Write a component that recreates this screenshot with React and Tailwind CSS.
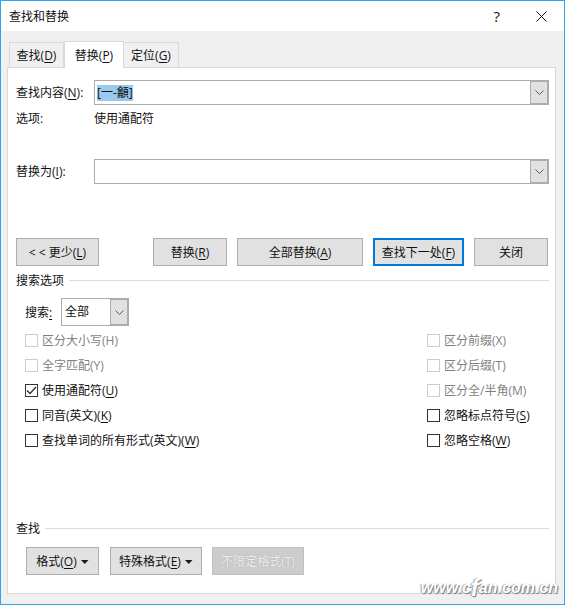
import React from "react";

const font = { fontFamily: '"Open Sans","Noto Sans CJK SC",sans-serif' };

function Chevron() {
  return (
    <svg width="9" height="5" viewBox="0 0 9 5" fill="none" stroke="#5a5a5a" strokeWidth="1">
      <path d="M0.5 0.5 L4.5 4.5 L8.5 0.5" />
    </svg>
  );
}

function Caret() {
  return (
    <svg width="8" height="4" viewBox="0 0 8 4" fill="#1a1a1a">
      <path d="M0 0 H7.5 L3.75 4 Z" />
    </svg>
  );
}

function U({ children }) {
  return <span className="underline underline-offset-2 decoration-1">{children}</span>;
}

function Combo({ children }) {
  return (
    <div className="flex h-[25px] flex-1 items-stretch border border-[#ababab] bg-white">
      <div className="flex flex-1 items-center pl-[2px]">{children}</div>
      <div className="flex w-[18px] items-center justify-center border border-[#adadad] bg-[#e1e1e1]">
        <Chevron />
      </div>
    </div>
  );
}

function Btn({ w, children, focus, disabled, ml }) {
  const base = "flex h-[28px] shrink-0 items-center justify-center gap-[4px] pt-px ";
  const skin = focus
    ? "border-2 border-[#0078d7] bg-[#e1e1e1]"
    : disabled
    ? "border border-[#bfbfbf] bg-[#cccccc] text-[#f0f0f0] [text-shadow:0_0_1px_#999]"
    : "border border-[#adadad] bg-[#e1e1e1]";
  return (
    <div className={base + skin} style={{ width: w, marginLeft: ml }}>
      {children}
    </div>
  );
}

function Check({ disabled, checked, children }) {
  return (
    <div className={"flex h-[25px] items-center gap-[4px] " + (disabled ? "text-[#7f7f7f]" : "text-[#111]")}>
      <div
        className={
          "flex h-[13px] w-[13px] items-center justify-center border bg-white " +
          (disabled ? "border-[#cccccc]" : "border-[#333333]")
        }
      >
        {checked && (
          <svg width="11" height="9" viewBox="0 0 11 9" fill="none" stroke="#333" strokeWidth="1.3">
            <path d="M1 4.5 L4 7.5 L10 1" />
          </svg>
        )}
      </div>
      <span className="pt-px">{children}</span>
    </div>
  );
}

function Section({ children }) {
  return (
    <div className="flex h-4 items-center gap-[5px] pl-2 pr-[6px]">
      <span className="pt-[2px]">{children}</span>
      <div className="h-px flex-1 bg-[#dcdcdc]" />
    </div>
  );
}

export default function App() {
  return (
    <div
      style={font}
      className="relative flex h-[605px] w-[565px] flex-col overflow-hidden border border-[#2ea3ee] bg-[#f0f0f0] text-[12px] leading-4 text-[#111]"
    >
      <div className="flex h-[30px] shrink-0 items-center bg-white pl-2">
        <span className="flex-1 pt-px">查找和替换</span>
        <span className="mr-[36px] text-[15px]">?</span>
        <svg className="mr-[17px]" width="11" height="11" viewBox="0 0 11 11" stroke="#111" strokeWidth="1" fill="none">
          <path d="M0.5 0.5 L10.5 10.5 M10.5 0.5 L0.5 10.5" />
        </svg>
      </div>

      <div className="flex h-[36px] shrink-0 items-end pl-2">
        <div className="flex h-[25px] w-[55px] items-center justify-center border border-b-0 border-[#d9d9d9] bg-[#f0f0f0] pt-px">
          查找(<U>D</U>)
        </div>
        <div className="z-10 -mb-px flex h-[27px] w-[60px] items-center justify-center border border-b-0 border-[#d9d9d9] bg-white pt-px">
          替换(<U>P</U>)
        </div>
        <div className="flex h-[25px] w-[55px] items-center justify-center border border-b-0 border-l-0 border-[#d9d9d9] bg-[#f0f0f0] pt-px">
          定位(<U>G</U>)
        </div>
      </div>

      <div className="mb-[10px] ml-[6px] mr-[8px] flex-1 border border-[#d9d9d9] bg-white pt-3">
        <div className="flex items-center pl-2 pr-[6px]">
          <div className="w-[78px] pt-px">
            查找内容(<U>N</U>):
          </div>
          <Combo>
            <span className="bg-[#99c9ef] leading-[16px]">[一-龥]</span>
          </Combo>
        </div>

        <div className="mt-[6px] flex h-4 items-center pl-2">
          <div className="w-[78px]">选项:</div>
          <div>使用通配符</div>
        </div>

        <div className="mt-[32px] flex items-center pl-2 pr-[6px]">
          <div className="w-[78px] pt-px">
            替换为(<U>I</U>):
          </div>
          <Combo />
        </div>

        <div className="mt-[54px] flex pl-2">
          <Btn w={83}>
            <span>
              &lt; &lt; 更少(<U>L</U>)
            </span>
          </Btn>
          <Btn w={74} ml={54}>
            <span>
              替换(<U>R</U>)
            </span>
          </Btn>
          <Btn w={126} ml={10}>
            <span>
              全部替换(<U>A</U>)
            </span>
          </Btn>
          <Btn w={91} ml={10} focus>
            <span>
              查找下一处(<U>F</U>)
            </span>
          </Btn>
          <Btn w={74} ml={10}>
            <span>关闭</span>
          </Btn>
        </div>

        <div className="mt-[6px]">
          <Section>搜索选项</Section>
        </div>

        <div className="mt-[10px] flex h-[28px] items-center pl-[17px]">
          <div className="w-[36px] pt-px">
            搜索<U>:</U>
          </div>
          <div className="flex h-[28px] w-[68px] items-stretch border border-[#ababab] bg-white">
            <div className="flex flex-1 items-center pl-[3px]">全部</div>
            <div className="flex w-[18px] items-center justify-center border border-[#adadad] bg-[#e1e1e1]">
              <Chevron />
            </div>
          </div>
        </div>

        <div className="mt-[2px] grid grid-cols-[402px_1fr] pl-[17px]">
          <div>
            <Check disabled>区分大小写(H)</Check>
            <Check disabled>全字匹配(Y)</Check>
            <Check checked>
              使用通配符(<U>U</U>)
            </Check>
            <Check>
              同音(英文)(<U>K</U>)
            </Check>
            <Check>
              查找单词的所有形式(英文)(<U>W</U>)
            </Check>
          </div>
          <div>
            <Check disabled>区分前缀(X)</Check>
            <Check disabled>区分后缀(T)</Check>
            <Check disabled>区分全/半角(M)</Check>
            <Check>
              忽略标点符号(<U>S</U>)
            </Check>
            <Check>
              忽略空格(<U>W</U>)
            </Check>
          </div>
        </div>

        <div className="mt-[67px]">
          <Section>查找</Section>
        </div>

        <div className="mt-[11px] flex pl-[18px]">
          <Btn w={73}>
            <span>
              格式(<U>O</U>)
            </span>
            <Caret />
          </Btn>
          <Btn w={92} ml={11}>
            <span>
              特殊格式(<U>E</U>)
            </span>
            <Caret />
          </Btn>
          <Btn w={92} ml={10} disabled>
            <span>不限定格式(T)</span>
          </Btn>
        </div>
      </div>

      <div className="absolute bottom-[8px] right-[6px] flex items-end text-[16px] font-bold italic leading-4 text-white [font-family:'Liberation_Sans',sans-serif] [text-shadow:1px_1px_1px_#777,-1px_0_1px_#999]">
        www.c<span className="text-[24px] leading-4">f</span>an.com.cn
      </div>
    </div>
  );
}
